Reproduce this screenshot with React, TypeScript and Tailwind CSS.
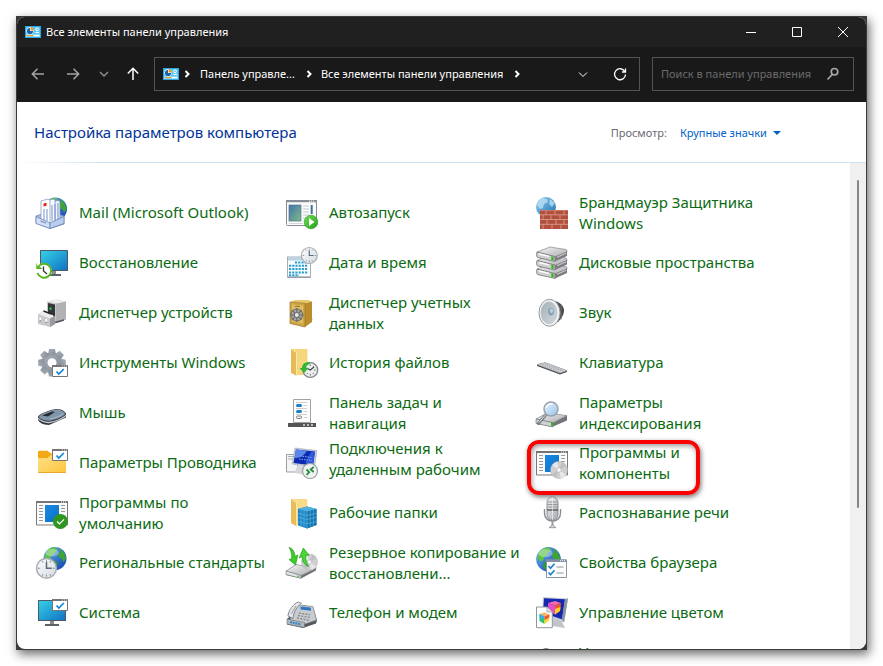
import type { ReactNode } from 'react'

const Globe = ({ cx, cy, r }: { cx: number; cy: number; r: number }) => (
    <g transform={`translate(${cx} ${cy}) scale(${r / 12})`}>
        <circle r="12" fill="url(#globe)" />
        <path d="M-9-7C-6-11-2-12 0-11.5L3-9 0-7-1-4-4-3-5 1-8 2-11-1Z" fill="#5cc243" />
        <path d="M4-10.500C8-9 11-5 11.500 0L9 4 7 0 4-1 3-5 6-7Z" fill="#3da535" />
        <path d="M-5 3 0 2 3 5 1 9-2 11-5 8Z" fill="#2f9a33" />
        <ellipse cx="-3" cy="-6" rx="7" ry="4" fill="#fff" opacity=".35" />
    </g>
)

const Clock = ({ cx, cy, r }: { cx: number; cy: number; r: number }) => (
    <g transform={`translate(${cx} ${cy}) scale(${r / 10})`}>
        <circle r="9.400" fill="url(#face)" stroke="#a9aeb4" strokeWidth="1.400" />
        <g stroke="#8d959e" strokeWidth="1">
            <path d="M0-8v2M0 6v2M-8 0h2M6 0h2M-4-7l.8 1.400M4-7l-.8 1.400M-4 7l.8-1.400M4 7l-.8-1.400" />
        </g>
        <path d="M0-6V0H5" fill="none" stroke="#5a6a80" strokeWidth="1.400" />
    </g>
)

const CheckWindow = ({ x, y }: { x: number; y: number }) => (
    <g transform={`translate(${x} ${y})`}>
        <path d="M.5.5h15v11H.5Z" fill="#fff" stroke="#757575" />
        <path d="M0 0h16v2H0Z" fill="#757575" />
        <path d="M10 1h1m1 0h1m1 0h1" stroke="#fff" strokeWidth=".8" />
        <path d="m4.500 6.500 2.300 2.500 5-5" fill="none" stroke="#0a84dc" strokeWidth="1.700" />
    </g>
)

const ProgramWindow = () => (
    <>
        <path d="M.5 4.500h31v23.500H.5Z" fill="#fbfbfb" stroke="#7a7a7a" />
        <path d="M0 4h32v2H0Z" fill="#757575" />
        <path d="M25 5h1m1 0h1m1 0h1" stroke="#fff" />
        <path
            d="M3 8.500h4M3 11.500h4M3 14.500h4M3 17.500h4M3 20.500h4M3 23.500h4M25 8.500h4M25 11.500h4M25 14.500h4"
            stroke="#999"
        />
        <path d="M9 8h14v17H9Z" fill="url(#blue)" />
    </>
)

const Drive = ({ y }: { y: number }) => (
    <g transform={`translate(0 ${y})`}>
        <path d="M1 5 14 0l16 2.500c1 .5 1 1.500 1 2.500l-12 6Z" fill="url(#metal)" stroke="#77777b" strokeWidth=".6" />
        <path d="m1 5 18 4.500v5L1.500 10.500C.3 9.500.3 6 1 5Z" fill="#cfcfd2" stroke="#66666a" strokeWidth=".7" />
        <path d="m19 9.500 12-5v4.500l-12 5.500Z" fill="#7c7c81" />
        <path d="m21 10.200 9-4" stroke="#c9c9cd" strokeWidth="1.200" />
        <path d="m15.300 9.200 2.400.6v3.700l-2.400-.5Z" fill="#35b818" />
        <path d="m3 7 10 2.300" stroke="#fff" strokeWidth="1.300" />
    </g>
)

const Disc = ({ cx, cy, r }: { cx: number; cy: number; r: number }) => (
    <g transform={`translate(${cx} ${cy}) scale(${r / 9})`}>
        <circle r="8.700" fill="#d0d0d2" stroke="#b4b4b8" strokeWidth=".6" />
        <path d="M0 0-7-5A8.600 8.600 0 0 1-2-8.400ZM0 0 7 5A8.600 8.600 0 0 1 2 8.400Z" fill="#e8e8ea" />
        <path d="M0 0 3-8A8.600 8.600 0 0 1 7.500-4ZM0 0-3 8A8.600 8.600 0 0 1-7.500 4Z" fill="#c0c0c4" />
        <circle r="2.400" fill="#eee" stroke="#b4b4b8" strokeWidth=".6" />
        <circle r="1" fill="#fff" />
    </g>
)

const Monitor = ({ x, w }: { x: number; w: number }) => (
    <>
        <path d={`M${x + w / 2 - 2} 24h4v3.500h-4Z`} fill="#8c8c8c" />
        <path d={`M${x + w / 2 - 7} 27h14v2h-14Z`} fill="#5c6166" />
        <rect x={x} y="3" width={w} height="21" rx=".6" fill="#4c5a66" />
        <rect x={x + 1} y="4" width={w - 2} height="19" fill="url(#screen)" />
    </>
)

const ICONS: Record<string, ReactNode> = {
    mail: (
        <>
            <Globe cx={19.5} cy={12} r={11.5} />
            <path d="m0 19 14-5 14 5v8l-14 4.500L0 26Z" fill="#a9bfe2" stroke="#6c84b5" strokeWidth=".7" />
            <path d="m15 5 7-1.500 2 .8V22l-8 4Z" fill="#eef4ff" stroke="#6d85b8" strokeWidth=".7" />
            <path d="m10 4 7-2 2 .8V25l-6 2Z" fill="#f7faff" stroke="#6d85b8" strokeWidth=".7" />
            <path d="m5 4 7-2 2 1v24l-9-3Z" fill="#fff" stroke="#7d93c0" strokeWidth=".7" />
            <path d="M16 8v16M19 7v16M22 6v17M8 12v11M11 12v12" stroke="#7690c6" strokeWidth="1" />
            <path d="m7.500 6.500 3-.7v3l-3 .7Z" fill="#e0241c" />
            <path d="m0 19.500 14 6.500v5.500L0 26.500Z" fill="#d3e1f8" stroke="#6880b5" strokeWidth=".8" />
            <path d="M14 26 28 19.500v7l-14 5Z" fill="#b9cdee" stroke="#6880b5" strokeWidth=".8" />
            <path d="m4.500 24 5.500 2" stroke="#8da3cf" strokeWidth="1.500" />
        </>
    ),
    recovery: (
        <>
            <Monitor x={4} w={28} />
            <circle cx="8" cy="23.700" r="7.600" fill="#fff" />
            <path d="M2.200 20A7 7 0 1 1 1.500 26" fill="none" stroke="#55b31c" strokeWidth="1.900" />
            <path d="M.3 15.500V22h6.200l-2-1.800L2 20Z" fill="#55b31c" />
            <path d="M7.500 19.500V24l3.500 3" fill="none" stroke="#333" strokeWidth="1.300" />
        </>
    ),
    devices: (
        <>
            <path d="m11 4.500 10-2 9 2v17.500L22 26l-11-4Z" fill="#c6c6c9" />
            <path d="m11 4.500 10-2 9 2-8 2.300Z" fill="#ececed" />
            <path d="m20 6.800 10-2.300v18L20 26Z" fill="#b2b2b5" />
            <path d="m12 6 7 1.500V18L12 16Z" fill="#34373a" />
            <path d="M13.500 10.500h2v2.200h-2Z" fill="#26e04a" />
            <path d="m2 17 6-3.500 4 1V17l4 .8 3 1v8.400L14 30 2 27Z" fill="#c9c9cd" />
            <path d="m2 17 6-3.500 4 1V17l7 2-5 2.500Z" fill="#ececee" />
            <path d="m14 21.500 5-2.500v8.200L14 30Z" fill="#9c9ca0" />
            <path d="m7.500 14 6.500 2.500 4 .8v2" fill="none" stroke="#26282b" strokeWidth="1.600" />
            <path d="M4.300 20.500v3.300M10.300 22v3.300" stroke="#fff" strokeWidth="1.600" />
            <path d="M4.300 23.500v.8M10.300 25v.8M19 25.500l9-2.500" stroke="#55585c" strokeWidth="1.600" />
        </>
    ),
    tools: (
        <>
            <g transform="translate(16 15.700)" fill="url(#gear)">
                <circle r="10.200" />
                {[0, 45, 90, 135, 180, 225, 270, 315].map((a) => (
                    <path key={a} d="M-4.200-7.500-3-13.800h6L4.200-7.500Z" transform={`rotate(${a})`} />
                ))}
                <circle r="4.500" fill="#fff" />
            </g>
            <CheckWindow x={16} y={18} />
        </>
    ),
    mouse: (
        <>
            <path d="M2 20c0-3 14-8 19-8s9 3 9 5.500v3L13 28C7 28 2 25 2 22Z" fill="#33373c" />
            <path d="M2 21c2 3 7 4.700 11 4.500 6-.5 16-5 17-7.500" fill="none" stroke="#c3c9cf" strokeWidth="1.300" />
            <path d="M3 19.500C5 16 17 12.500 21 12.500s8 2.500 8 4.500-11 6.500-16 6.700S3 21.500 3 19.500Z" fill="#7f95a9" />
            <path d="m6 18.500 10-4 3 .5-7 4.500Z" fill="#272b30" />
            <path d="M14 22c5-1 11-3.500 13-5.500" fill="none" stroke="#a9bccd" />
        </>
    ),
    explorer: (
        <>
            <path d="M2 5c0-1 .5-1.300 1.500-1.300h8L15 6.500h14c.7 0 1 .4 1 1V12H2Z" fill="#f3a815" />
            <path d="M2 12c0-.6.3-1 1-1h8.500L15 8h15v17c0 .6-.4 1-1 1H3c-.6 0-1-.4-1-1Z" fill="url(#folder)" />
            <path d="M2 25.500h28" stroke="#e8a92a" />
            <CheckWindow x={16} y={2} />
        </>
    ),
    defaults: (
        <>
            <ProgramWindow />
            <circle cx="24.400" cy="24.400" r="7.500" fill="#2f9620" />
            <path d="m21 24.500 2.500 2.300 4.500-4.500" fill="none" stroke="#fff" strokeWidth="1.200" />
        </>
    ),
    region: (
        <>
            <Globe cx={19} cy={11.5} r={11.5} />
            <Clock cx={10.5} cy={21.3} r={10.5} />
        </>
    ),
    system: (
        <>
            <Monitor x={2} w={28} />
            <CheckWindow x={16} y={2} />
        </>
    ),
    autorun: (
        <>
            <rect x=".5" y="3.500" width="30" height="25" rx="1" fill="#fcfcfc" stroke="#868d94" />
            <path d="M0 3h31v2.300H0Z" fill="#868d94" />
            <path d="M23 4.200h1m1 0h1m1 0h1" stroke="#fff" />
            <rect x="3" y="8" width="12" height="16" fill="url(#photo)" stroke="#59718d" strokeWidth=".7" />
            <path d="M17 9h6M17 12h6M17 15h6M17 18h6M17 21h4" stroke="#c3c7cb" />
            <path d="M25.700 8v9" stroke="#3b6fa5" strokeWidth="2" />
            <path d="M3 26.500h14" stroke="#d5d8db" />
            <circle cx="25" cy="25" r="6.800" fill="url(#green)" stroke="#2b9720" strokeWidth=".6" />
            <path d="m23 21 5.500 4-5.500 4Z" fill="#fff" />
        </>
    ),
    date: (
        <>
            <rect x="1.500" y="10" width="23" height="20" fill="#fafdff" stroke="#a4adb5" />
            <path d="M2 10.500h22v3H2Z" fill="#b7d3e6" />
            <path d="M1.500 30.300h23" stroke="#8e979f" strokeWidth="1.200" />
            <path
                d="M9 15.500h13M3 18.800h19M3 22.100h19M3 25.400h19M3 28.300h10"
                stroke="#2c9fd0"
                strokeWidth="2"
                strokeDasharray="2.200 1"
            />
            <Clock cx={23.300} cy={8.5} r={8.5} />
        </>
    ),
    safe: (
        <>
            <path d="m17 28 10-7v1.500L20 29Z" fill="#dcdcdc" />
            <path d="m4 5 5-2h13l4 1.500-7 1.800Z" fill="#e7c76c" />
            <path d="M19 6.300 26 4.500V25l-7 5Z" fill="#b98c2c" />
            <path d="M4 5 19 6.300V30L4 26.500Z" fill="#cfa544" stroke="#9d7626" strokeWidth=".7" />
            <path d="M6 7.500 17 8.500v18L6 24.500Z" fill="#dfbd67" />
            <circle cx="10.800" cy="18" r="6" fill="#a5a6a4" stroke="#6a6a66" />
            <path d="M10.800 11v14M4 18h13.500M6 13.200l9.600 9.600M15.600 13.200 6 22.800" stroke="#6a6a66" strokeWidth="1.100" />
            <circle cx="10.800" cy="18" r="2.500" fill="#e7e7e5" stroke="#666" />
            <path d="M9 9.300h5" stroke="#8f6d25" />
        </>
    ),
    history: (
        <>
            <path d="M5 2h16.500v26H10L5 26Z" fill="#f7d77e" />
            <path d="m5 2 5.500 3.500V29L5 25.500Z" fill="#e6bb57" />
            <path d="m6.500 3 4 2.500V28" fill="none" stroke="#fbe8ac" />
            <circle cx="24.300" cy="23" r="7.400" fill="#eceeee" stroke="#84898d" strokeWidth="1.400" />
            <path
                d="M24.300 17.500v1.500M24.300 27v1.500M29.500 23H28M27.800 19l-.9.900M27.800 27l-.9-.9M20.800 27l.9-.9"
                stroke="#666"
            />
            <path d="m20.500 21 3.800 2 3.700-3" fill="none" stroke="#42484e" strokeWidth="1.300" />
            <path d="M24 15c-5-.3-8 2-8 6h-2.500l4.700 5 4.300-5h-2.300c0-2.500 1.500-3.700 3.800-4Z" fill="#35b437" />
        </>
    ),
    taskbar: (
        <>
            <path d="M7.500 2.500h17v23h-17Z" fill="#fcfcfc" stroke="#a2a2a2" />
            <path d="M10 5.500h11M17.500 8.500h4M10 11.500h11M17.500 14.500h4M10 17.500h11M17.500 20.500h4" stroke="#d0d0d0" />
            <rect x="10" y="7" width="6" height="3" rx="1.500" fill="#1582c5" />
            <rect x="10" y="13" width="6" height="3" rx="1.500" fill="#1582c5" />
            <rect x="10.500" y="19" width="5" height="2.500" rx="1" fill="#eee" stroke="#666" strokeWidth=".8" />
            <path d="M2 26h28v4H2Z" fill="#555" />
            <path d="M17 27h2v2h-2ZM21 27h2v2h-2ZM25 27h2v2h-2Z" fill="#bdbdbd" />
        </>
    ),
    remote: (
        <>
            <path d="M.5 7.500h11v17.500H.5Z" fill="#f3f4f5" stroke="#9ba0a5" />
            <path d="M2 9.500h6M2 12h6" stroke="#aab0b6" />
            <path d="m11 19-2 7 10 2 4-8Z" fill="#d4d6d9" />
            <path d="m9 1 22 2.500-2.500 17L6 17Z" fill="#c5cdd7" stroke="#a3acb6" strokeWidth=".6" />
            <path d="m10 2.500 19 2-2 14L7.500 16Z" fill="#0c2aaf" />
            <path d="m10 2.500 11 1.200C18 9 13 11 8.500 11Z" fill="#5b86ec" />
            <path d="m19 16 6-11 4-.2-2 13Z" fill="#2d59de" />
            <path d="m14 9 12 1.500M13 12l13 1.500" stroke="#88aaf5" strokeDasharray="1.500 1" />
            <circle cx="24" cy="24" r="7.500" fill="#f1f2f2" stroke="#9a9ea2" strokeWidth="1.200" />
            <path d="m20.500 22.500 2.700 2.700-2.700 2.800" fill="none" stroke="#238a3c" strokeWidth="1.800" />
            <path d="m27.700 19.800-3 2.700 3 2.500" fill="none" stroke="#238a3c" strokeWidth="1.800" />
        </>
    ),
    workfolders: (
        <>
            <path d="M5 2h16.300v26H10L5 26Z" fill="#f8da87" />
            <path d="m5 2 5.500 3.500V29.500L5 26Z" fill="#e8be5d" />
            <path d="M6.500 3 10.500 5.500V28" fill="none" stroke="#fbe8ac" />
            <path d="m12 12 9-2.500 9.500 2.500v16L21 31.500 12 28.500Z" fill="#1e88c6" />
            <path d="m21 14 9.500-2v16L21 31.500Z" fill="#1673ae" />
            <path d="m12 12 9-2.500 9.500 2.500-9.500 2.500Z" fill="#4fb0e0" />
            <path
                d="m12 16.200 9 2.300 9.500-2.300M12 20.300l9 2.300 9.500-2.300M12 24.500l9 2.300 9.500-2.300M15 13v16.500M18 13.800v16.700M21 14.500v17M24.200 13.500v17M27.400 12.800v16.500"
                fill="none"
                stroke="#58b2e0"
                strokeWidth=".7"
            />
        </>
    ),
    backup: (
        <>
            <path d="m0 24 10-6.500 20 3.500v2.500L15 31.500 0 28Z" fill="#6f7175" />
            <path d="m0 24 10-6.500 20.500 3.500L15 28.500Z" fill="url(#metal)" stroke="#909296" strokeWidth=".6" />
            <path d="m0 24 15 4.500v2.800L0 27.500Z" fill="#e5e6e8" stroke="#75787c" strokeWidth=".6" />
            <path d="m11 28.500 2.500.6V30l-2.500-.5Z" fill="#3ac91f" />
            <Disc cx={23.5} cy={15} r={8.3} />
            <path
                d="M3 .5c4 1 6 5 6 9l2.800-1.500L9.500 18 3 12.500l2.700-.8C6 7 5 3 3 .5Z"
                fill="#3ecb28"
                stroke="#1c9c18"
                strokeWidth=".7"
            />
            <path
                d="M22.500 19.500c-4-1.500-6.500-5-6.200-10L13.300 11 17.300 1 23 8.200l-3.200.2c-.5 4 .7 8 2.700 11.100Z"
                fill="#4bd734"
                stroke="#1c9c18"
                strokeWidth=".7"
            />
        </>
    ),
    phone: (
        <>
            <path d="m1 22 16-14 10 2 4 13.500-1 3L17 31 1 27.500Z" fill="#54595f" />
            <path d="m6 16 7-8 14 1.500 3.500 13.500L19 27 4 23Z" fill="#c8cccf" stroke="#7b8085" strokeWidth=".6" />
            <path d="m1 22 17.500 3.500v5L1 27Z" fill="#b3b8bd" stroke="#6b7076" strokeWidth=".6" />
            <path d="m4 25 11 2.500" stroke="#3588cb" strokeWidth="2.200" strokeDasharray="2 .7" />
            <path d="m14.500 9.500 10 1 .7 3.300-10.700-1.300Z" fill="#2b78c0" />
            <path
                d="m13 16 11 1.700M12 18.500l12 2M11 21l12 2.300"
                stroke="#83888d"
                strokeWidth="1.300"
                strokeDasharray="2 1.300"
            />
            <path d="M2 19C2 14 8 6 12.500 5l3 1.500c-5 3-8 9-8.500 15Z" fill="#e6e9eb" stroke="#6b7076" strokeWidth=".8" />
            <path d="m5 17 5-8" stroke="#a4a9ae" strokeWidth="1.300" />
        </>
    ),
    firewall: (
        <>
            <circle cx="10" cy="10" r="10" fill="url(#iceglobe)" />
            <path d="m2 5 4-4 5 1 1 3-4 2-1 4-3 1-3-4ZM14 2l5 4-3 4-3-3Z" fill="#c5e6f7" opacity=".7" />
            <path d="M4 13h28v19H4Z" fill="#b34f3d" />
            <path
                d="M4 17.800h28M4 22.500h28M4 27.300h28M10 13v5M19 13v5M28 13v5M7 18v5M15 18v5M24 18v5M11 22.500v5M20 22.500v5M28 22.500v5M7 27.300V32M16 27.300V32M25 27.300V32"
                stroke="#dba596"
                strokeWidth=".8"
            />
            <path d="M4 13.500h28" stroke="#cf7660" />
        </>
    ),
    storage: (
        <>
            <Drive y={17} />
            <Drive y={8.5} />
            <Drive y={0} />
        </>
    ),
    sound: (
        <>
            <path d="M17 4c6 0 11 5 11 9.500S24 25 18 27Z" fill="#45474a" />
            <path d="M22 6v19M25 8.500v14" stroke="#707377" />
            <ellipse cx="13.500" cy="15.800" rx="10.500" ry="13.500" fill="#f1f2f3" stroke="#94979b" strokeWidth="1" />
            <ellipse cx="13" cy="15.800" rx="8" ry="11" fill="url(#cone)" stroke="#b9bcc0" strokeWidth=".6" />
            <ellipse cx="15" cy="14.500" rx="3" ry="4" fill="#86a3b3" />
            <ellipse cx="15.500" cy="13.800" rx="1.600" ry="2.200" fill="#b9d3df" />
        </>
    ),
    keyboard: (
        <>
            <path d="m1 17.500 8-2 22 8v1.500l-7 2.500L1 19Z" fill="#4d5054" />
            <path d="m1 17.500 8-2 22 8-7 2.500Z" fill="#d3d5d8" stroke="#9da0a4" strokeWidth=".5" />
            <path
                d="m4 17.500 20 7M6.500 17l20 7M8.500 16.500l19.500 7"
                stroke="#a6a9ad"
                strokeWidth=".9"
                strokeDasharray="1.500 .8"
            />
        </>
    ),
    indexing: (
        <>
            <path d="m0 22 11-6 20 2.500v5L16 30 0 26.500Z" fill="#717479" />
            <path d="m0 22 11-6 20 2.500-14 7.300Z" fill="url(#metal)" stroke="#8b8e92" strokeWidth=".6" />
            <path d="m0 22 17 3.800V30L0 26.500Z" fill="#cfd1d4" stroke="#707377" strokeWidth=".6" />
            <path d="m15 24.800 2 .5v4l-2-.5Z" fill="#33ba1a" />
            <path d="m10.500 17-8 9.500" stroke="#7a7e83" strokeWidth="3" strokeLinecap="round" />
            <path d="m10 17.300-7 8.200" stroke="#dfe2e5" strokeWidth="1" />
            <circle cx="15" cy="12" r="7" fill="url(#lens)" stroke="#98a3af" strokeWidth="1.500" />
            <path d="M10.500 11c.5-3 3-4.500 6-4" fill="none" stroke="#fff" strokeWidth="1.300" />
        </>
    ),
    programs: (
        <>
            <ProgramWindow />
            <Disc cx={23} cy={23} r={8.8} />
        </>
    ),
    speech: (
        <>
            <path d="M8.500 12v4c0 5 3.500 8 8 8s8-3 8-8v-4" fill="none" stroke="#898c91" strokeWidth="1.400" />
            <path d="M15.500 24h2v4.500h-2Z" fill="#9a9da1" />
            <path d="m13 30.700 3.500-3 3.500 3Z" fill="#d3d5d7" stroke="#7e8185" strokeWidth=".7" />
            <rect x="11" y="0" width="11" height="23" rx="5.500" fill="url(#mic)" stroke="#7e8186" strokeWidth=".9" />
            <path d="M12 5h9M11.500 7.500h10M11.500 10h10" stroke="#8e9196" strokeWidth=".9" />
            <path d="M11 13h11" stroke="#5d6065" strokeWidth="1.500" />
            <path d="M16.500 1v22" stroke="#fff" opacity=".5" />
        </>
    ),
    internet: (
        <>
            <Globe cx={12.5} cy={12.3} r={12.3} />
            <path d="M10.500 13h20v17.500h-20Z" fill="#fdfdfd" stroke="#8c95a2" />
            <path d="M10 12.500h21v2.500H10Z" fill="#8490a3" />
            <path d="M24 13.700h1m1 0h1m1 0h1" stroke="#fff" />
            <path
                d="m12.500 19 2 2.300 4-4.500M12.500 25.500l2 2.300 4-4.500"
                fill="none"
                stroke="#1f83c5"
                strokeWidth="1.700"
            />
            <path d="M20.500 20h7M20.500 26h7" stroke="#8d9197" strokeWidth="1.100" />
        </>
    ),
    color: (
        <>
            <path d="m17 22-1 7 13 2-4-8Z" fill="#c1c5ca" />
            <path d="m7 0 25 1.500-4 24L6 18Z" fill="#c4cbd4" />
            <path d="m8 1.300 21 1-3 20L7 16Z" fill="#1428b0" />
            <path d="m29 2.300 3-.8-4 24-2-3.200Z" fill="#8b929b" />
            <path d="m12 6 7-2 6 2-6 2.500Z" fill="#f76ab0" />
            <path d="m12 6 7 2.500v9L12 14Z" fill="#e34fc7" />
            <path d="m19 8.500 6-2.500-1 8-5 3.500Z" fill="#f0572c" />
            <path d="m19 12 5.500-2-.5 4-5 3.500Z" fill="#ffd22a" />
            <path d="M.5 10h10.500l5.300 5v15.700H.5Z" fill="#fff" stroke="#8e959d" />
            <path d="M11 10v5h5" fill="#dfe3e8" stroke="#8e959d" strokeWidth=".7" />
            <path d="m3.500 17 5-1.500 5 2-5 2Z" fill="#fbb26a" />
            <path d="m3.500 17 5 2.500V27L3.500 24Z" fill="#2fc36a" />
            <path d="m3.500 17 5 2.500v3.500l-5-2.500Z" fill="#31b5e8" />
            <path d="m8.500 19.500 5-2-.5 6-4.500 3.500Z" fill="#f9d531" />
            <path d="m8.500 19.500 5-2-.3 3-4.700 2.500Z" fill="#f2502f" />
        </>
    ),
    users: (
        <>
            <circle cx="10" cy="7" r="6" fill="#8a8a8a" />
            <path d="M2 28c0-9 3-14 8-14s8 5 8 14Z" fill="#3d9b52" />
        </>
    ),
}

type Item = { icon: string; lines: string[]; marked?: boolean; raised?: boolean; last?: boolean }

const ITEMS: Item[] = [
    { icon: 'mail', lines: ['Mail (Microsoft Outlook)'] },
    { icon: 'autorun', lines: ['Автозапуск'] },
    { icon: 'firewall', lines: ['Брандмауэр Защитника', 'Windows'] },
    { icon: 'recovery', lines: ['Восстановление'] },
    { icon: 'date', lines: ['Дата и время'] },
    { icon: 'storage', lines: ['Дисковые пространства'] },
    { icon: 'devices', lines: ['Диспетчер устройств'] },
    { icon: 'safe', lines: ['Диспетчер учетных', 'данных'] },
    { icon: 'sound', lines: ['Звук'] },
    { icon: 'tools', lines: ['Инструменты Windows'] },
    { icon: 'history', lines: ['История файлов'] },
    { icon: 'keyboard', lines: ['Клавиатура'] },
    { icon: 'mouse', lines: ['Мышь'] },
    { icon: 'taskbar', lines: ['Панель задач и', 'навигация'] },
    { icon: 'indexing', lines: ['Параметры', 'индексирования'] },
    { icon: 'explorer', lines: ['Параметры Проводника'] },
    { icon: 'remote', lines: ['Подключения к', 'удаленным рабочим'], raised: true },
    { icon: 'programs', lines: ['Программы и', 'компоненты'], marked: true },
    { icon: 'defaults', lines: ['Программы по', 'умолчанию'] },
    { icon: 'workfolders', lines: ['Рабочие папки'] },
    { icon: 'speech', lines: ['Распознавание речи'] },
    { icon: 'region', lines: ['Региональные стандарты'] },
    { icon: 'backup', lines: ['Резервное копирование и', 'восстановлени...'] },
    { icon: 'internet', lines: ['Свойства браузера'] },
    { icon: 'system', lines: ['Система'] },
    { icon: 'phone', lines: ['Телефон и модем'] },
    { icon: 'color', lines: ['Управление цветом'] },
    { icon: 'users', lines: ['Учетные записи', 'пользователей'], last: true },
]

// Shared gradients, referenced by id from every icon
function Gradients() {
    const list: [string, string, string][] = [
        ['screen', '#35d0e6', '#1173c4'],
        ['blue', '#1a8be0', '#0a6fc9'],
        ['folder', '#ffe08a', '#fcc63c'],
        ['gear', '#a9b0b8', '#838b95'],
        ['metal', '#f7f7f8', '#a8a9ac'],
        ['photo', '#3f75ae', '#7fbb86'],
        ['green', '#6cdc52', '#23a31b'],
        ['face', '#ffffff', '#d3d9df'],
        ['cone', '#a4aeb6', '#d3dade'],
        ['lens', '#e6f2fd', '#9cc3ec'],
        ['mic', '#f3f4f5', '#a5a8ad'],
        ['iceglobe', '#8fd0f0', '#1c6fae'],
        ['globe', '#6fb4f3', '#0b3fa8'],
    ]
    return (
        <svg className="absolute size-0" aria-hidden="true">
            <defs>
                {list.map(([id, from, to]) => (
                    <linearGradient key={id} id={id} x1="0" y1="0" x2="1" y2="1">
                        <stop offset="0" stopColor={from} />
                        <stop offset="1" stopColor={to} />
                    </linearGradient>
                ))}
            </defs>
        </svg>
    )
}

function PanelIcon() {
    return (
        <svg viewBox="0 0 16 12" className="h-3 w-4 shrink-0" aria-hidden="true">
            <path d="M0 0h16v12H0Z" fill="#2ba6e6" />
            <path d="M1 1h14v10H1Z" fill="#8fdcfb" />
            <path d="M1 1h14v7H1Z" fill="#5cc6f5" />
            <circle cx="5" cy="4.800" r="3.600" fill="#fff" />
            <path d="M5 5V1.900A3.100 3.100 0 1 0 8.100 5Z" fill="#1c62ae" />
            <path d="M5.600 4.400V1a3.500 3.500 0 0 1 3.200 3.400Z" fill="#f39a1e" />
            <circle cx="12" cy="3.400" r="1.400" fill="none" stroke="#fff" />
            <path d="M10.500 6.500h3.500" stroke="#fff" />
            <path d="M2 9.700h6" stroke="#f39a1e" strokeWidth="1.300" />
            <path d="M9 9.700h5" stroke="#fff" strokeWidth="1.200" />
        </svg>
    )
}

function Glyph({ d, className }: { d: string; className: string }) {
    return (
        <svg viewBox="0 0 16 16" fill="none" stroke="currentColor" className={`size-4 shrink-0 ${className}`} aria-hidden="true">
            <path d={d} />
        </svg>
    )
}

const CRUMB = 'm6.500 5 3 3-3 3'

function TitleBar() {
    return (
        <header className="flex h-[30px] shrink-0 items-center bg-[#202020] text-white">
            <div className="flex flex-1 items-center gap-[5px] pl-2">
                <PanelIcon />
                <h1 className="text-[11px]">Все элементы панели управления</h1>
            </div>
            <div className="flex">
                <button aria-label="Свернуть" className="grid h-[30px] w-[46px] place-items-center">
                    <Glyph d="M3 8.500h10" className="stroke-1" />
                </button>
                <button aria-label="Развернуть" className="grid h-[30px] w-[46px] place-items-center">
                    <Glyph d="M3.500 3.500h9v9h-9Z" className="stroke-1" />
                </button>
                <button aria-label="Закрыть" className="grid h-[30px] w-[46px] place-items-center">
                    <Glyph d="m3 3 10 10M13 3 3 13" className="stroke-1" />
                </button>
            </div>
        </header>
    )
}

function Toolbar() {
    return (
        <div className="flex h-[55px] shrink-0 items-center bg-[#191919] pr-3 pb-px pl-[13px] text-[11px] text-white">
            <nav className="flex w-[124px] shrink-0 items-center">
                <button aria-label="Назад" className="w-[35px] text-[#a3a3a3]">
                    <Glyph d="M14 8H2.500M7.500 2.800 2.300 8l5.200 5.200" className="stroke-[1.500]" />
                </button>
                <button aria-label="Вперед" className="w-[31px] text-[#a3a3a3]">
                    <Glyph d="M2 8h11.500M8.500 2.800 13.700 8l-5.200 5.200" className="stroke-[1.500]" />
                </button>
                <button aria-label="Последние расположения" className="w-[29px] text-[#8c8c8c]">
                    <Glyph d="m4 6 4 4 4-4" className="stroke-[1.500]" />
                </button>
                <button aria-label="Вверх" className="text-white">
                    <Glyph d="M8 14V2.500M2.800 7.500 8 2.300l5.200 5.200" className="stroke-[1.500]" />
                </button>
            </nav>
            <div className="flex h-[34px] min-w-0 flex-1 items-center border border-[#535353] pl-2">
                <PanelIcon />
                <Glyph d={CRUMB} className="mr-1 stroke-2" />
                <button className="pl-px whitespace-nowrap">Панель управле...</button>
                <Glyph d={CRUMB} className="mr-1 ml-1.5 stroke-2" />
                <button className="truncate">Все элементы панели управления</button>
                <Glyph d={CRUMB} className="ml-1.5 stroke-2" />
                <button aria-label="Предыдущие расположения" className="ml-auto">
                    <Glyph d="m4 6.500 4 4 4-4" className="stroke-1" />
                </button>
                <button aria-label="Обновить" className="mr-[11px] ml-[21px]">
                    <Glyph d="M12.800 5.500A5.500 5.500 0 1 0 13.500 8.500M13.500 2.500v3.500H10" className="stroke-[1.300]" />
                </button>
            </div>
            <form className="ml-3 flex h-[34px] w-[202px] shrink-0 items-center border border-[#535353] pr-3 pl-2">
                <input
                    type="search"
                    aria-label="Поиск в панели управления"
                    placeholder="Поиск в панели управления"
                    className="min-w-0 flex-1 bg-transparent text-[11px] outline-none placeholder:text-[#6b6b6b]"
                />
                <Glyph
                    d="M9.500 2.500a3.200 3.200 0 1 1 0 6.500 3.200 3.200 0 0 1 0-6.500ZM7.200 8.500 2.500 13.500"
                    className="stroke-[1.700] text-[#a8a8a8]"
                />
            </form>
        </div>
    )
}

function PanelLink({ item }: { item: Item }) {
    return (
        <a
            href="#"
            className={`relative flex h-[50px] items-center gap-[11px] text-[15px] leading-[21px] text-[#0b6b12] ${item.last ? 'col-start-3' : ''}`}
        >
            <svg viewBox="0 0 32 32" className="size-8 shrink-0 overflow-visible" aria-hidden="true">
                {ICONS[item.icon]}
            </svg>
            <span className={`whitespace-nowrap ${item.raised ? 'pb-2' : 'pb-px'}`}>
                {item.lines.map((line) => (
                    <span key={line} className="block">
                        {line}
                    </span>
                ))}
            </span>
            {item.marked && (
                <span className="absolute top-[2px] -left-[9px] h-[55px] w-[173px] rounded-xl border-4 border-[#fa0202] shadow-[1px_2px_5px_rgba(0,0,0,0.55),inset_1px_2px_5px_rgba(0,0,0,0.4)]" />
            )}
        </a>
    )
}

export default function App() {
    return (
        <div className="flex h-screen flex-col bg-white p-4 font-['Noto_Sans','Open_Sans',sans-serif]">
            <Gradients />
            <div className="flex min-h-0 flex-1 flex-col bg-[#3a3a3a] p-px shadow-[2px_4px_10px_rgba(0,0,0,0.6)]">
                <div className="flex min-h-0 flex-1 flex-col overflow-hidden rounded-lg bg-white">
                    <TitleBar />
                    <Toolbar />
                    <div className="flex h-[60px] shrink-0 items-center pt-px pr-[85px] pl-[17px]">
                        <h2 className="flex-1 text-[15px] text-[#003399]">Настройка параметров компьютера</h2>
                        <label htmlFor="view" className="mr-[13px] pt-0.5 text-[11px] text-[#6a6a75]">
                            Просмотр:
                        </label>
                        <select
                            id="view"
                            className="appearance-none bg-transparent pt-0.5 text-[11px] text-[#0062cc] outline-none"
                        >
                            <option>Крупные значки</option>
                            <option>Мелкие значки</option>
                            <option>Категория</option>
                        </select>
                        <svg viewBox="0 0 8 4" className="ml-1.5 h-1 w-2 shrink-0" aria-hidden="true">
                            <path d="M0 0h8L4 4Z" fill="#0062cc" />
                        </svg>
                    </div>
                    <div className="h-px shrink-0 bg-linear-to-r from-white via-[#cfe1f1] via-10% to-[#cfe1f1]" />
                    <main className="flex min-h-0 flex-1">
                        <div className="grid flex-1 auto-rows-[50px] grid-cols-[repeat(auto-fill,250px)] overflow-hidden pt-[25px] pl-[19px]">
                            {ITEMS.map((item) => (
                                <PanelLink key={item.icon} item={item} />
                            ))}
                        </div>
                        <div className="flex w-4 shrink-0 justify-center bg-[#f0f0f0] pt-[17px]">
                            <div className="h-[70%] w-[2px] rounded-full bg-[#858585]" />
                        </div>
                    </main>
                </div>
            </div>
        </div>
    )
}
